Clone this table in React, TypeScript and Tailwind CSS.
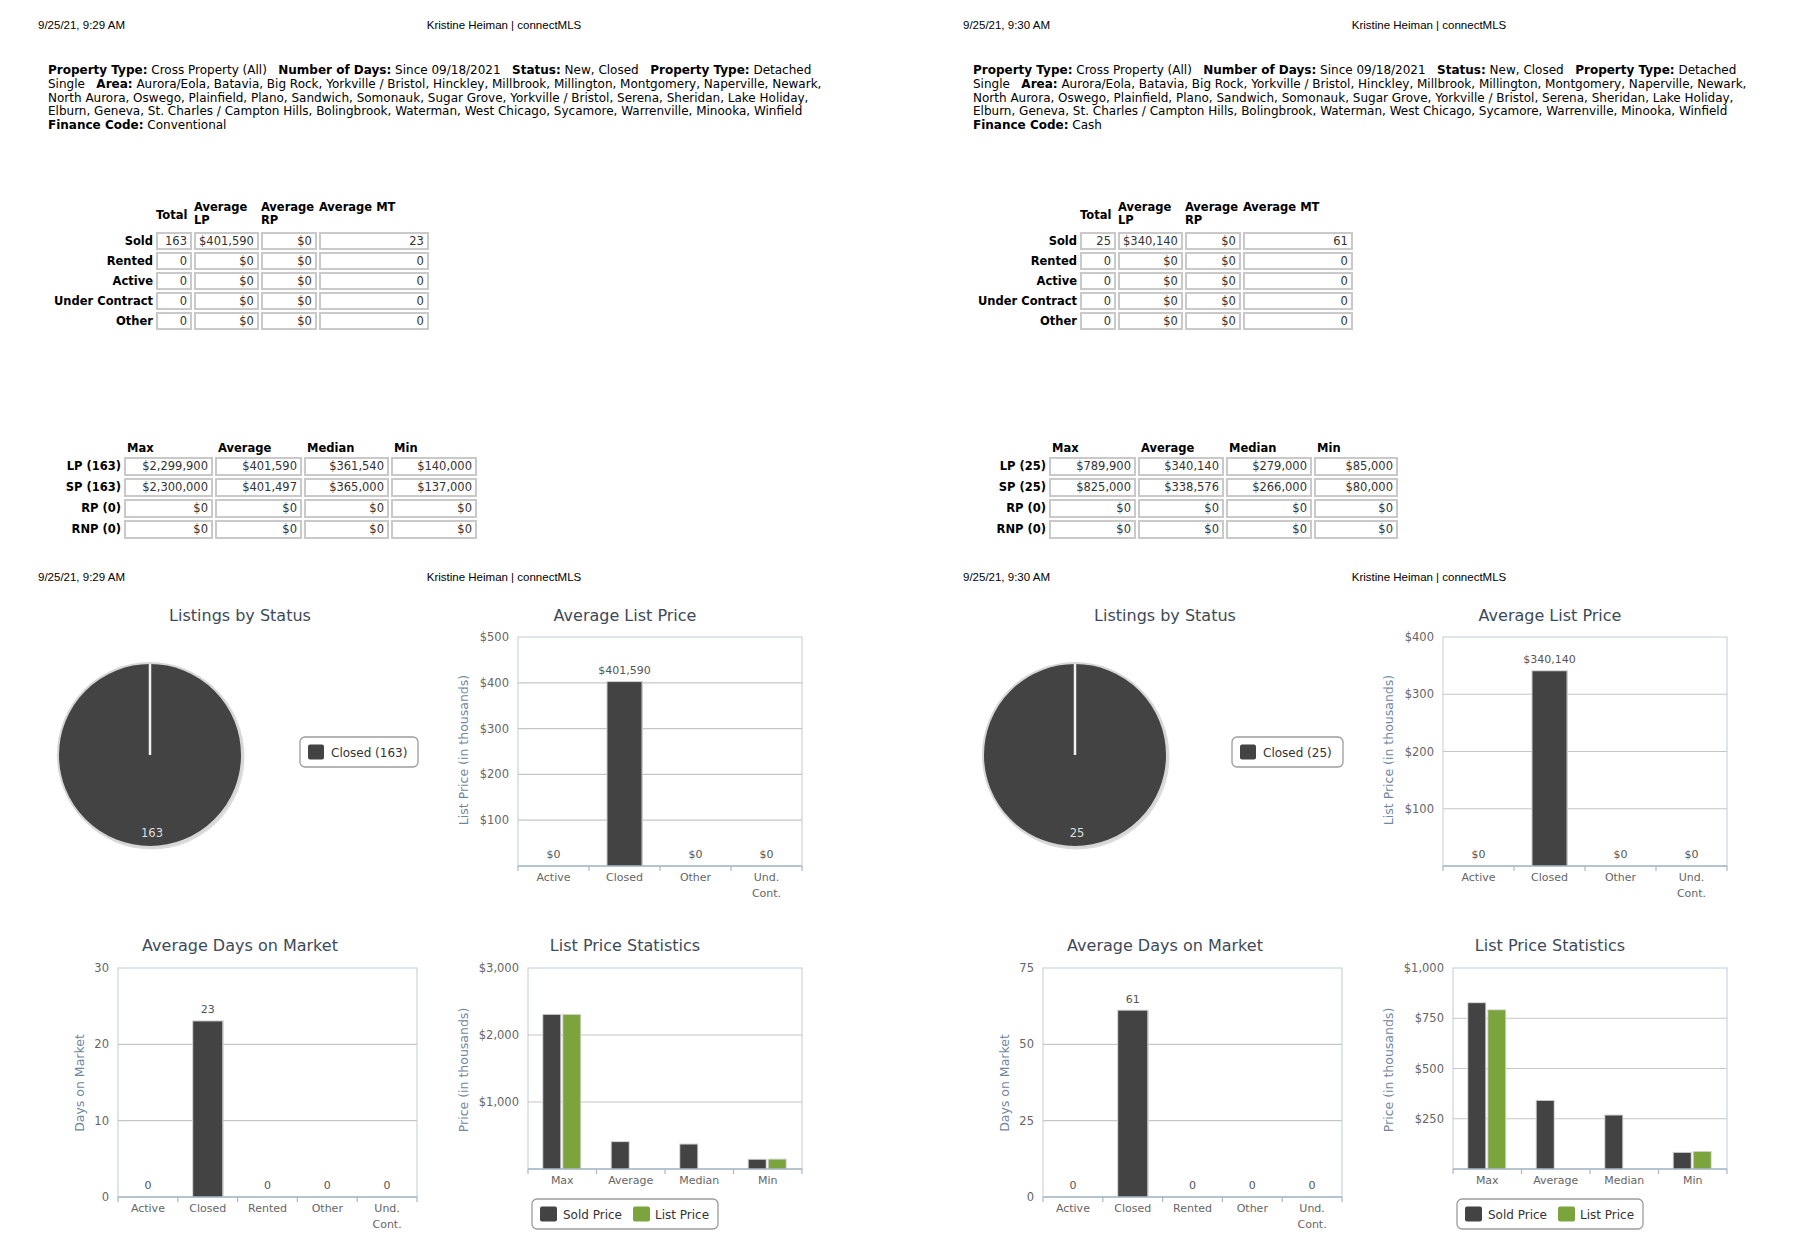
import React from "react";

type Cat = { label: string[]; sold: number; list?: number; text?: string };
type Tick = { v: number; label: string };

const DARK = "#434343";
const GREEN = "#7ba43d";

function PrintHeader({ time }: { time: string }) {
  return (
    <div className="flex h-[12px] items-center pl-[38px] font-['Liberation_Sans',Arial,sans-serif] text-[11.5px] leading-[12px] text-black">
      <span className="w-[300px]">9/25/21, {time}</span>
      <span className="w-[332px] text-center">Kristine Heiman | connectMLS</span>
    </div>
  );
}

function Criteria({ finance }: { finance: string }) {
  const gap = "\u00a0\u00a0 ";
  return (
    <div className="ml-[48px] font-['DejaVu_Sans',sans-serif] text-[12px] leading-[13.8px] text-black">
      <div className="whitespace-nowrap">
        <b>Property Type:</b> Cross Property (All){gap}
        <b>Number of Days:</b> Since 09/18/2021{gap}
        <b>Status:</b> New, Closed{gap}
        <b>Property Type:</b> Detached
      </div>
      <div className="whitespace-nowrap">
        Single{gap}
        <b>Area:</b> Aurora/Eola, Batavia, Big Rock, Yorkville / Bristol, Hinckley, Millbrook, Millington, Montgomery, Naperville, Newark,
      </div>
      <div className="whitespace-nowrap">
        North Aurora, Oswego, Plainfield, Plano, Sandwich, Somonauk, Sugar Grove, Yorkville / Bristol, Serena, Sheridan, Lake Holiday,
      </div>
      <div className="whitespace-nowrap">
        Elburn, Geneva, St. Charles / Campton Hills, Bolingbrook, Waterman, West Chicago, Sycamore, Warrenville, Minooka, Winfield
      </div>
      <div className="whitespace-nowrap">
        <b>Finance Code:</b> {finance}
      </div>
    </div>
  );
}

const cell = "border-2 border-[#c9c9c9] px-[3px] text-right align-middle font-normal text-[#333] whitespace-nowrap";

type Row = [string, string, string, string, string];

function SummaryTable({ labelW, widths, rows }: { labelW: number; widths: number[]; rows: Row[] }) {
  return (
    <table className="ml-[48px] border-separate [border-spacing:2px] font-['DejaVu_Sans',sans-serif] text-[11.5px] leading-[13px] text-black">
      <thead>
        <tr className="h-[29px]">
          <th style={{ width: labelW }}></th>
          <th className="text-left align-middle font-bold">Total</th>
          <th className="text-left align-top font-bold">
            Average
            <br />
            LP
          </th>
          <th className="text-left align-top font-bold">
            Average
            <br />
            RP
          </th>
          <th className="text-left align-top font-bold whitespace-nowrap">Average MT</th>
        </tr>
      </thead>
      <tbody>
        {rows.map((r) => (
          <tr key={r[0]} className="h-[18px]">
            <th className="pr-[1px] text-right font-bold whitespace-nowrap">{r[0]}</th>
            {r.slice(1).map((v, i) => (
              <td key={i} className={cell} style={{ width: widths[i] }}>
                {v}
              </td>
            ))}
          </tr>
        ))}
      </tbody>
    </table>
  );
}

function StatsTable({ labelW, widths, rows }: { labelW: number; widths: number[]; rows: Row[] }) {
  return (
    <table className="ml-[48px] border-separate [border-spacing:2px] font-['DejaVu_Sans',sans-serif] text-[11.5px] leading-[13px] text-black">
      <thead>
        <tr className="h-[13px]">
          <th style={{ width: labelW }}></th>
          {["Max", "Average", "Median", "Min"].map((h) => (
            <th key={h} className="pl-[3px] text-left font-bold">
              {h}
            </th>
          ))}
        </tr>
      </thead>
      <tbody>
        {rows.map((r) => (
          <tr key={r[0]} className="h-[19px]">
            <th className="pr-[1px] text-right font-bold whitespace-nowrap">{r[0]}</th>
            {r.slice(1).map((v, i) => (
              <td key={i} className={cell} style={{ width: widths[i] }}>
                {v}
              </td>
            ))}
          </tr>
        ))}
      </tbody>
    </table>
  );
}

function PieChart({ total }: { total: number }) {
  const w = total >= 100 ? 118 : 111;
  const x = 418 - w;
  return (
    <svg width={440} height={330} viewBox="0 590 440 330" className="block shrink-0 font-['DejaVu_Sans',sans-serif]">
      <text x={240} y={615} textAnchor="middle" dominantBaseline="central" fontSize={16} fill="#3d4a58">
        Listings by Status
      </text>
      <circle cx={151.5} cy={756.5} r={93} fill="#dcdcdc" />
      <circle cx={150} cy={755} r={92} fill={DARK} stroke="#d6d6d6" strokeWidth={2} />
      <line x1={150} y1={755} x2={150} y2={664} stroke="#f0f0f0" strokeWidth={2.5} />
      <text x={152} y={833} textAnchor="middle" dominantBaseline="central" fontSize={11.5} fill="#dedede">
        {total}
      </text>
      <rect x={x} y={737} width={w} height={30} rx={5} fill="white" stroke="#9c9c9c" strokeWidth={1.3} />
      <rect x={x + 8} y={744.5} width={16} height={15} rx={2} fill={DARK} />
      <text x={x + 31} y={752.5} dominantBaseline="central" fontSize={12} fill="#333">
        Closed ({total})
      </text>
    </svg>
  );
}

type ChartProps = {
  x0: number;
  y0: number;
  w: number;
  h: number;
  title: string;
  titleX: number;
  titleY: number;
  plot: { l: number; t: number; r: number; b: number };
  max: number;
  ticks: Tick[];
  yTitle: string;
  yTitleX: number;
  yTitleY: number;
  cats: Cat[];
  barW: number;
  pair?: boolean;
};

function BarChart(p: ChartProps) {
  const { l, t, r, b } = p.plot;
  const yOf = (v: number) => b - (v / p.max) * (b - t);
  const catW = (r - l) / p.cats.length;
  return (
    <svg
      width={p.w}
      height={p.h}
      viewBox={`${p.x0} ${p.y0} ${p.w} ${p.h}`}
      className="block shrink-0 font-['DejaVu_Sans',sans-serif]"
    >
      <text x={p.titleX} y={p.titleY} textAnchor="middle" dominantBaseline="central" fontSize={16} fill="#3d4a58">
        {p.title}
      </text>
      <rect x={l} y={t} width={r - l} height={b - t} fill="white" stroke="#ccd4dc" strokeWidth={1.2} />
      {p.ticks
        .filter((k) => k.v > 0 && k.v < p.max)
        .map((k) => (
          <line key={k.v} x1={l} x2={r} y1={yOf(k.v)} y2={yOf(k.v)} stroke="#c6c6c6" strokeWidth={1.2} />
        ))}
      {p.ticks.map((k) => (
        <text
          key={k.v}
          x={l - 9}
          y={yOf(k.v)}
          textAnchor="end"
          dominantBaseline="central"
          fontSize={11.5}
          fill="#666"
        >
          {k.label}
        </text>
      ))}
      <text
        x={p.yTitleX}
        y={p.yTitleY}
        transform={`rotate(-90 ${p.yTitleX} ${p.yTitleY})`}
        textAnchor="middle"
        dominantBaseline="central"
        fontSize={12.5}
        fill="#6f87a0"
      >
        {p.yTitle}
      </text>
      {p.cats.map((c, i) => {
        const cx = l + catW * (i + 0.5);
        if (p.pair) {
          return (
            <g key={i}>
              {c.sold > 0 && (
                <>
                  <rect x={cx - 20} y={yOf(c.sold) - 1} width={19} height={b - yOf(c.sold) + 1} fill="#cfcfcf" />
                  <rect x={cx - 19} y={yOf(c.sold)} width={17} height={b - yOf(c.sold)} fill={DARK} />
                </>
              )}
              {c.list !== undefined && (
                <>
                  <rect x={cx} y={yOf(c.list) - 1} width={19} height={b - yOf(c.list) + 1} fill="#d6d6d6" />
                  <rect x={cx + 1} y={yOf(c.list)} width={17} height={b - yOf(c.list)} fill={GREEN} />
                </>
              )}
            </g>
          );
        }
        const top = yOf(c.sold);
        return (
          <g key={i}>
            {c.sold > 0 && (
              <>
                <rect x={cx - p.barW / 2 - 1} y={top - 1} width={p.barW + 2.5} height={b - top + 1} fill="#cccccc" />
                <rect x={cx - p.barW / 2} y={top} width={p.barW} height={b - top} fill={DARK} />
              </>
            )}
            <text x={cx} y={top - 11.5} textAnchor="middle" dominantBaseline="central" fontSize={11} fill="#555">
              {c.text}
            </text>
          </g>
        );
      })}
      <line x1={l} x2={r} y1={b} y2={b} stroke="#a9b8c6" strokeWidth={1.6} />
      {p.cats.map((_, i) => (
        <line key={i} x1={l + catW * i} x2={l + catW * i} y1={b} y2={b + 5} stroke="#a9b8c6" strokeWidth={1.2} />
      ))}
      <line x1={r} x2={r} y1={b} y2={b + 5} stroke="#a9b8c6" strokeWidth={1.2} />
      {p.cats.map((c, i) => (
        <text key={i} textAnchor="middle" fontSize={11} fill="#666">
          {c.label.map((ln, j) => (
            <tspan key={j} x={l + catW * (i + 0.5)} y={b + 15 + j * 16}>
              {ln}
            </tspan>
          ))}
        </text>
      ))}
      {p.pair && (
        <g>
          <rect x={532} y={1199} width={186} height={30} rx={5} fill="white" stroke="#9c9c9c" strokeWidth={1.3} />
          <rect x={540} y={1206.5} width={17} height={15} rx={2} fill={DARK} />
          <text x={563} y={1214.5} dominantBaseline="central" fontSize={12} fill="#333">
            Sold Price
          </text>
          <rect x={633} y={1206.5} width={17} height={15} rx={2} fill={GREEN} />
          <text x={655} y={1214.5} dominantBaseline="central" fontSize={12} fill="#333">
            List Price
          </text>
        </g>
      )}
    </svg>
  );
}

type PageData = {
  time: string;
  finance: string;
  summaryLabelW: number;
  statsLabelW: number;
  statsWidths: number[];
  summary: Row[];
  stats: Row[];
  total: number;
  avgLp: { value: number; text: string; max: number; ticks: Tick[] };
  dom: { value: number; max: number; ticks: Tick[] };
  lps: { max: number; ticks: Tick[]; cats: Cat[] };
};

function Page({ d, width }: { d: PageData; width: string }) {
  return (
    <div className={`h-[1260px] shrink-0 bg-white ${width}`}>
      <div className="h-[64px] pt-[19px]">
        <PrintHeader time={d.time} />
      </div>
      <div className="h-[135px]">
        <Criteria finance={d.finance} />
      </div>
      <div className="h-[241px]">
        <SummaryTable labelW={d.summaryLabelW} widths={[36, 62, 56, 110]} rows={d.summary} />
      </div>
      <div className="h-[131px]">
        <StatsTable labelW={d.statsLabelW} widths={d.statsWidths} rows={d.stats} />
      </div>
      <div className="h-[19px]">
        <PrintHeader time={d.time} />
      </div>
      <div className="flex">
        <PieChart total={d.total} />
        <BarChart
          x0={440}
          y0={590}
          w={390}
          h={330}
          title="Average List Price"
          titleX={625}
          titleY={615}
          plot={{ l: 518, t: 637, r: 802, b: 866 }}
          max={d.avgLp.max}
          ticks={d.avgLp.ticks}
          yTitle="List Price (in thousands)"
          yTitleX={463}
          yTitleY={750}
          barW={34}
          cats={[
            { label: ["Active"], sold: 0, text: "$0" },
            { label: ["Closed"], sold: d.avgLp.value, text: d.avgLp.text },
            { label: ["Other"], sold: 0, text: "$0" },
            { label: ["Und.", "Cont."], sold: 0, text: "$0" },
          ]}
        />
      </div>
      <div className="flex">
        <BarChart
          x0={0}
          y0={920}
          w={440}
          h={330}
          title="Average Days on Market"
          titleX={240}
          titleY={945}
          plot={{ l: 118, t: 968, r: 417, b: 1197 }}
          max={d.dom.max}
          ticks={d.dom.ticks}
          yTitle="Days on Market"
          yTitleX={79}
          yTitleY={1083}
          barW={29}
          cats={[
            { label: ["Active"], sold: 0, text: "0" },
            { label: ["Closed"], sold: d.dom.value, text: String(d.dom.value) },
            { label: ["Rented"], sold: 0, text: "0" },
            { label: ["Other"], sold: 0, text: "0" },
            { label: ["Und.", "Cont."], sold: 0, text: "0" },
          ]}
        />
        <BarChart
          x0={440}
          y0={920}
          w={390}
          h={330}
          title="List Price Statistics"
          titleX={625}
          titleY={945}
          plot={{ l: 528, t: 968, r: 802, b: 1169 }}
          max={d.lps.max}
          ticks={d.lps.ticks}
          yTitle="Price (in thousands)"
          yTitleX={463}
          yTitleY={1070}
          barW={17}
          pair
          cats={d.lps.cats}
        />
      </div>
    </div>
  );
}

const zeroRow = (label: string): Row => [label, "0", "$0", "$0", "0"];

const left: PageData = {
  time: "9:29 AM",
  finance: "Conventional",
  summaryLabelW: 104,
  statsLabelW: 72,
  statsWidths: [89, 87, 85, 86],
  summary: [
    ["Sold", "163", "$401,590", "$0", "23"],
    zeroRow("Rented"),
    zeroRow("Active"),
    zeroRow("Under Contract"),
    zeroRow("Other"),
  ],
  stats: [
    ["LP (163)", "$2,299,900", "$401,590", "$361,540", "$140,000"],
    ["SP (163)", "$2,300,000", "$401,497", "$365,000", "$137,000"],
    ["RP (0)", "$0", "$0", "$0", "$0"],
    ["RNP (0)", "$0", "$0", "$0", "$0"],
  ],
  total: 163,
  avgLp: {
    value: 401.59,
    text: "$401,590",
    max: 500,
    ticks: [100, 200, 300, 400, 500].map((v) => ({ v, label: `$${v}` })),
  },
  dom: { value: 23, max: 30, ticks: [0, 10, 20, 30].map((v) => ({ v, label: String(v) })) },
  lps: {
    max: 3000,
    ticks: [
      { v: 1000, label: "$1,000" },
      { v: 2000, label: "$2,000" },
      { v: 3000, label: "$3,000" },
    ],
    cats: [
      { label: ["Max"], sold: 2300, list: 2299.9 },
      { label: ["Average"], sold: 401.497 },
      { label: ["Median"], sold: 365 },
      { label: ["Min"], sold: 137, list: 140 },
    ],
  },
};

const right: PageData = {
  time: "9:30 AM",
  finance: "Cash",
  summaryLabelW: 103,
  statsLabelW: 72,
  statsWidths: [87, 86, 86, 84],
  summary: [
    ["Sold", "25", "$340,140", "$0", "61"],
    zeroRow("Rented"),
    zeroRow("Active"),
    zeroRow("Under Contract"),
    zeroRow("Other"),
  ],
  stats: [
    ["LP (25)", "$789,900", "$340,140", "$279,000", "$85,000"],
    ["SP (25)", "$825,000", "$338,576", "$266,000", "$80,000"],
    ["RP (0)", "$0", "$0", "$0", "$0"],
    ["RNP (0)", "$0", "$0", "$0", "$0"],
  ],
  total: 25,
  avgLp: {
    value: 340.14,
    text: "$340,140",
    max: 400,
    ticks: [100, 200, 300, 400].map((v) => ({ v, label: `$${v}` })),
  },
  dom: { value: 61, max: 75, ticks: [0, 25, 50, 75].map((v) => ({ v, label: String(v) })) },
  lps: {
    max: 1000,
    ticks: [
      { v: 250, label: "$250" },
      { v: 500, label: "$500" },
      { v: 750, label: "$750" },
      { v: 1000, label: "$1,000" },
    ],
    cats: [
      { label: ["Max"], sold: 825, list: 789.9 },
      { label: ["Average"], sold: 338.576 },
      { label: ["Median"], sold: 266 },
      { label: ["Min"], sold: 80, list: 85 },
    ],
  },
};

export default function App() {
  return (
    <div className="flex h-[1260px] w-[1800px] overflow-hidden bg-white">
      <Page d={left} width="w-[925px]" />
      <Page d={right} width="w-[925px]" />
    </div>
  );
}
